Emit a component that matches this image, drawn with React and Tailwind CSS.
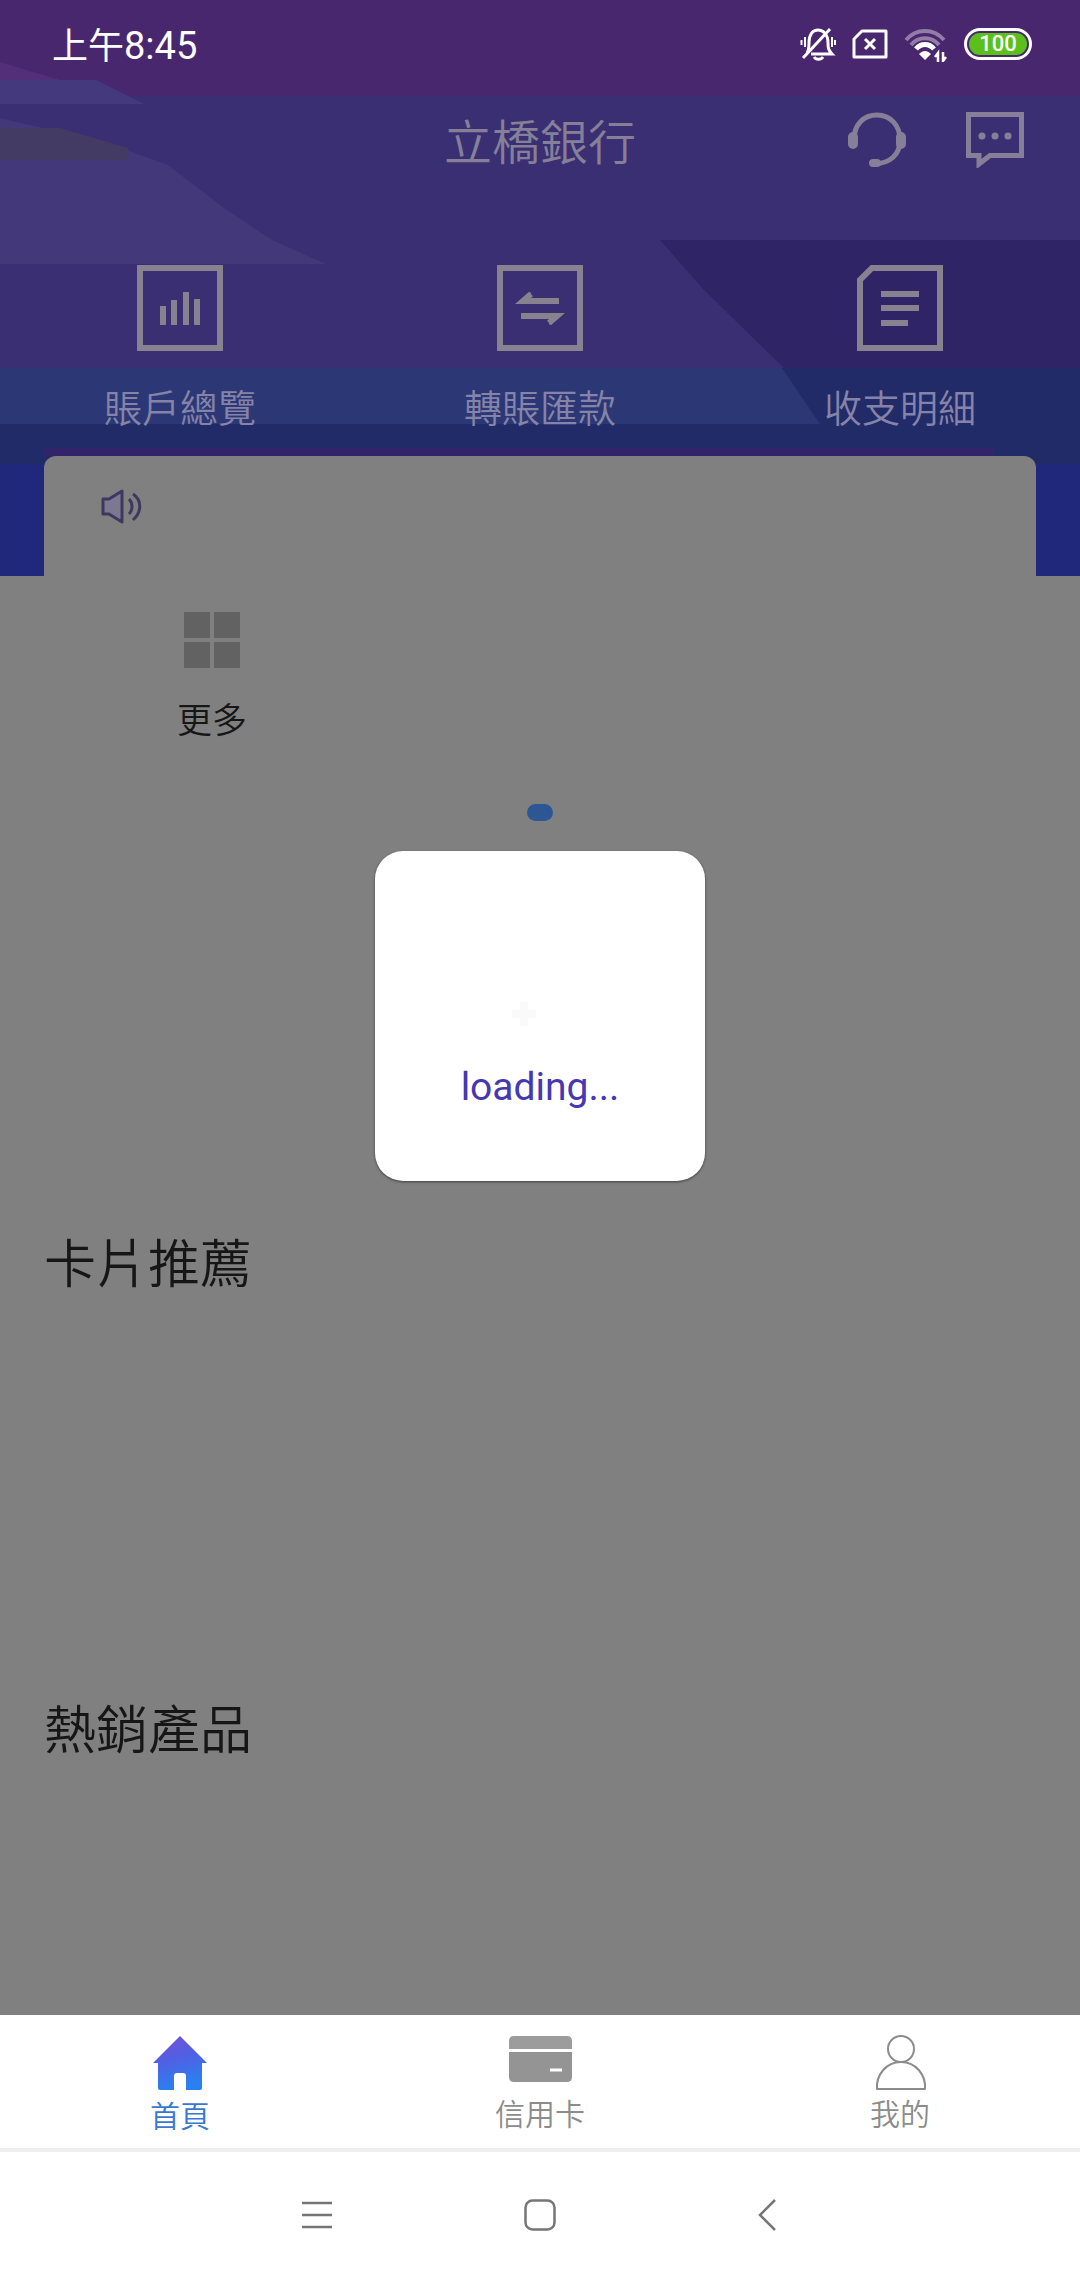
const cjk = 'font-["Roboto","Noto_Sans_CJK_TC",sans-serif]';

function BannerArt() {
  return (
    <svg
      className="absolute inset-0 h-full w-full"
      viewBox="0 0 1080 576"
      preserveAspectRatio="none"
      aria-hidden="true"
    >
      <rect width="1080" height="96" fill="#48276f" />
      <rect y="96" width="1080" height="272" fill="#3a2f72" />
      <rect y="368" width="1080" height="56" fill="#2b3875" />
      <rect y="424" width="1080" height="40" fill="#212b68" />
      <rect y="464" width="1080" height="112" fill="#1f287b" />
      <rect x="44" y="448" width="950" height="8" fill="#31246a" />
      <path d="M0 62L60 80H0Z" fill="#522f78" />
      <path d="M0 80H96L144 104H0Z" fill="#43397c" />
      <path d="M0 118L104 142L168 165L224 208L272 240L326 264H0Z" fill="#43387a" />
      <path d="M0 128H60L128 148V160H0Z" fill="#443b64" />
      <path d="M660 240H1080V368H784L704 290Z" fill="#2f2465" />
      <path d="M782 368H1080V424H820Z" fill="#212b68" />
    </svg>
  );
}

function StatusBar() {
  return (
    <div className="relative flex h-24 items-center justify-between pr-12 pb-1 pl-[52px] text-white">
      <div className="flex items-baseline text-[36px] leading-none">
        上午<span className="text-[38px]">8:45</span>
      </div>
      <div className="flex items-center gap-4 pb-1">
        <svg className="h-9 w-9" viewBox="0 0 36 36" fill="none" stroke="currentColor" strokeWidth="3" aria-label="靜音">
          <path d="M7 27C9 24 9 21 9 17C9 8 13 4 18 4S28 8 28 17C28 21 28 24 32 28H11" />
          <path d="M30 3L3 32" />
          <path d="M14 31C16 34 21 34 23 31" />
          <path d="M5 11V21M1.500 14V19M32 11V21M35 14V19" strokeWidth="2" />
        </svg>
        <svg className="h-8 w-9" viewBox="0 0 36 32" fill="none" stroke="currentColor" strokeWidth="3" aria-label="無 SIM 卡">
          <path d="M10 3H34V29H2V11Z" strokeLinejoin="round" />
          <path d="M13 11L23 21M23 11L13 21" />
        </svg>
        <svg className="h-9 w-11" viewBox="0 0 44 36" fill="none" stroke="currentColor" strokeWidth="4" aria-label="Wi-Fi">
          <path d="M2 14C12 2 30 2 40 14" opacity=".4" />
          <path d="M7 19C14 10 28 10 35 19" opacity=".4" />
          <path d="M12 23C17 17 25 17 30 23" strokeWidth="5" />
          <path d="M21 34L15 28C19 24 23 24 27 28Z" fill="currentColor" stroke="none" />
          <path d="M34 36V27L31 31M39 26V35L42 31" strokeWidth="2.500" />
        </svg>
        <div className="flex h-8 w-[68px] items-center justify-center rounded-full border-3 border-white p-0.5">
          <div className="flex h-full w-full items-center justify-center rounded-full bg-[#5cc01c] text-[22px] leading-none font-medium">
            100
          </div>
        </div>
      </div>
    </div>
  );
}

function TitleBar() {
  return (
    <header className="relative grid grid-cols-3 items-start px-14 text-[#858098]">
      <h1 className="col-start-2 pt-1 text-center text-[48px] leading-[88px] font-[350]">立橋銀行</h1>
      <div className="flex justify-end gap-14 pt-4">
        <button type="button" aria-label="客戶服務">
          <svg className="h-14 w-16" viewBox="0 0 64 56" fill="none" stroke="currentColor" strokeWidth="5">
            <path d="M8 28C8 12 18 3 31 3S54 13 54 28 44 51 29 52" />
            <path d="M7 25V32M55 25V32" strokeWidth="10" strokeLinecap="round" />
            <path d="M27 51H31" strokeWidth="8" strokeLinecap="round" />
          </svg>
        </button>
        <button type="button" aria-label="訊息">
          <svg className="h-14 w-[58px]" viewBox="0 0 58 56" fill="none" stroke="currentColor" strokeWidth="5">
            <path d="M2.500 2.500H55.500V43.500H24L13 52V43.500H2.500Z" />
            <g fill="currentColor" stroke="none">
              <circle cx="16" cy="24" r="3.500" />
              <circle cx="29" cy="24" r="3.500" />
              <circle cx="42" cy="24" r="3.500" />
            </g>
          </svg>
        </button>
      </div>
    </header>
  );
}

const quickLinks = [
  {
    label: "賬戶總覽",
    art: (
      <>
        <path d="M3 3H83V83H3Z" strokeWidth="6" />
        <path d="M26 60V41M37 60V35M49 60V27M60 60V34" strokeWidth="6" />
      </>
    ),
  },
  {
    label: "轉賬匯款",
    art: (
      <>
        <path d="M3 3H83V83H3Z" strokeWidth="6" />
        <path d="M62 36H26L34 29M24 51H60L52 58" strokeWidth="6" />
        <path d="M24 38L34 27V38ZM62 49L52 60V49Z" fill="currentColor" stroke="none" />
      </>
    ),
  },
  {
    label: "收支明細",
    art: (
      <>
        <path d="M15 3H83V83H3V15Z" strokeWidth="6" />
        <path d="M24 29H62M24 43H62M24 58H51" strokeWidth="6" />
      </>
    ),
  },
];

function QuickLinks() {
  return (
    <nav className="relative grid grid-cols-3 pt-[77px]">
      {quickLinks.map(({ label, art }) => (
        <button key={label} type="button" className="flex flex-col items-center gap-[30px]">
          <svg className="h-[86px] w-[86px] text-[#87828f]" viewBox="0 0 86 86" fill="none" stroke="currentColor">
            {art}
          </svg>
          <span className="text-[38px] leading-[56px] font-[350] text-[#8683a8]">{label}</span>
        </button>
      ))}
    </nav>
  );
}

function TabBar() {
  return (
    <nav className="grid h-[137px] grid-cols-3 border-b-4 border-[#eeeeee] bg-white pt-5 text-[30px] leading-[40px] font-[350] text-[#8c8c8c]">
      <a href="#home" className="flex flex-col items-center gap-1.5 text-[#3a78d0]">
        <svg className="h-14 w-14" viewBox="0 0 56 56">
          <defs>
            <linearGradient id="roof" x1="0" y1="0" x2=".3" y2="1">
              <stop offset="0" stopColor="#7650d8" />
              <stop offset=".5" stopColor="#5060e4" />
              <stop offset="1" stopColor="#2a80f0" />
            </linearGradient>
          </defs>
          <path d="M28 1L55 28H50V53Q50 55 48 55H34V41Q34 38 31 38H25Q22 38 22 41V55H8Q6 55 6 53V28H1Z" fill="url(#roof)" />
        </svg>
        首頁
      </a>
      <a href="#cards" className="flex flex-col items-center gap-1">
        <svg className="h-14 w-16" viewBox="0 0 64 56">
          <path d="M1 14V6Q1 1 6 1H59Q64 1 64 6V14Z" fill="#9c9c9c" />
          <path d="M1 17H64V42Q64 47 59 47H6Q1 47 1 42Z" fill="#949494" />
          <path d="M42 35H54" stroke="#fff" strokeWidth="3" />
        </svg>
        信用卡
      </a>
      <a href="#mine" className="flex flex-col items-center gap-1">
        <svg className="h-14 w-14" viewBox="0 0 56 56" fill="none" stroke="#8c8c8c" strokeWidth="2">
          <circle cx="29" cy="14" r="13" />
          <path d="M5 54C4 40 14 27 29 27S54 40 53 54Z" strokeLinejoin="round" />
        </svg>
        我的
      </a>
    </nav>
  );
}

function SystemNav() {
  return (
    <div className="flex h-32 items-center justify-center gap-48 bg-white pb-0.5 text-[#767676]">
      <button type="button" aria-label="選單">
        <svg className="h-8 w-8" viewBox="0 0 32 32" stroke="currentColor" strokeWidth="2.500">
          <path d="M2 4H32M2 16H32M2 28H32" />
        </svg>
      </button>
      <button type="button" aria-label="主畫面">
        <svg className="h-8 w-8" viewBox="0 0 32 32" fill="none" stroke="currentColor" strokeWidth="2.500">
          <rect x="1.500" y="1.500" width="29" height="29" rx="7" />
        </svg>
      </button>
      <button type="button" aria-label="返回">
        <svg className="h-8 w-8" viewBox="0 0 32 32" fill="none" stroke="currentColor" strokeWidth="2.500">
          <path d="M27 1L12 16L27 31" />
        </svg>
      </button>
    </div>
  );
}

export default function App() {
  return (
    <div className={`${cjk} flex min-h-screen flex-col bg-[#808080]`}>
      <div className="relative flex flex-1 flex-col">
        <section className="relative">
          <BannerArt />
          <StatusBar />
          <TitleBar />
          <QuickLinks />
          <div className="relative mx-11 mt-[19px] h-[120px] rounded-t-xl bg-[#808080] px-14 pt-8">
            <svg className="h-9 w-11" viewBox="0 0 44 36" fill="none" stroke="#3e3760" strokeWidth="3" aria-label="公告">
              <path d="M3 11H9L22 3V34L9 26H3Z" fill="#7d7891" strokeLinejoin="round" />
              <path d="M29 11C33 15 33 22 29 26M33 6C42 12 42 24 33 32" />
            </svg>
          </div>
        </section>

        <main className="flex flex-col text-[#161616]">
          <div className="grid grid-cols-3 px-12 pt-9">
            <button type="button" className="flex flex-col items-center gap-7 text-[35px] leading-[52px] font-[350]">
              <span className="grid h-14 w-14 grid-cols-2 gap-1" aria-hidden="true">
                <span className="bg-[#626262]" />
                <span className="bg-[#626262]" />
                <span className="bg-[#626262]" />
                <span className="bg-[#626262]" />
              </span>
              更多
            </button>
          </div>
          <div className="mx-auto mt-14 h-[17px] w-[26px] rounded-full bg-[#2d5694]" />
          <h2 className="mt-[405px] px-11 text-[52px] leading-[80px] font-[350]">卡片推薦</h2>
          <h2 className="mt-[386px] px-11 text-[52px] leading-[80px] font-[350]">熱銷產品</h2>
        </main>

        <div className="absolute inset-0 flex items-center justify-center pt-4">
          <div
            role="status"
            className="flex h-[330px] w-[330px] flex-col items-center justify-end rounded-[28px] bg-white pb-[69px] shadow-sm shadow-black/40"
          >
            <svg className="mr-8 mb-9 h-6 w-6" viewBox="0 0 24 24" aria-hidden="true">
              <path d="M8 0H16V8H24V16H16V24H8V16H0V8H8Z" fill="#fafafa" />
            </svg>
            <p className="text-[39px] leading-[50px] text-[#4638b0]">loading...</p>
          </div>
        </div>
      </div>
      <TabBar />
      <SystemNav />
    </div>
  );
}
